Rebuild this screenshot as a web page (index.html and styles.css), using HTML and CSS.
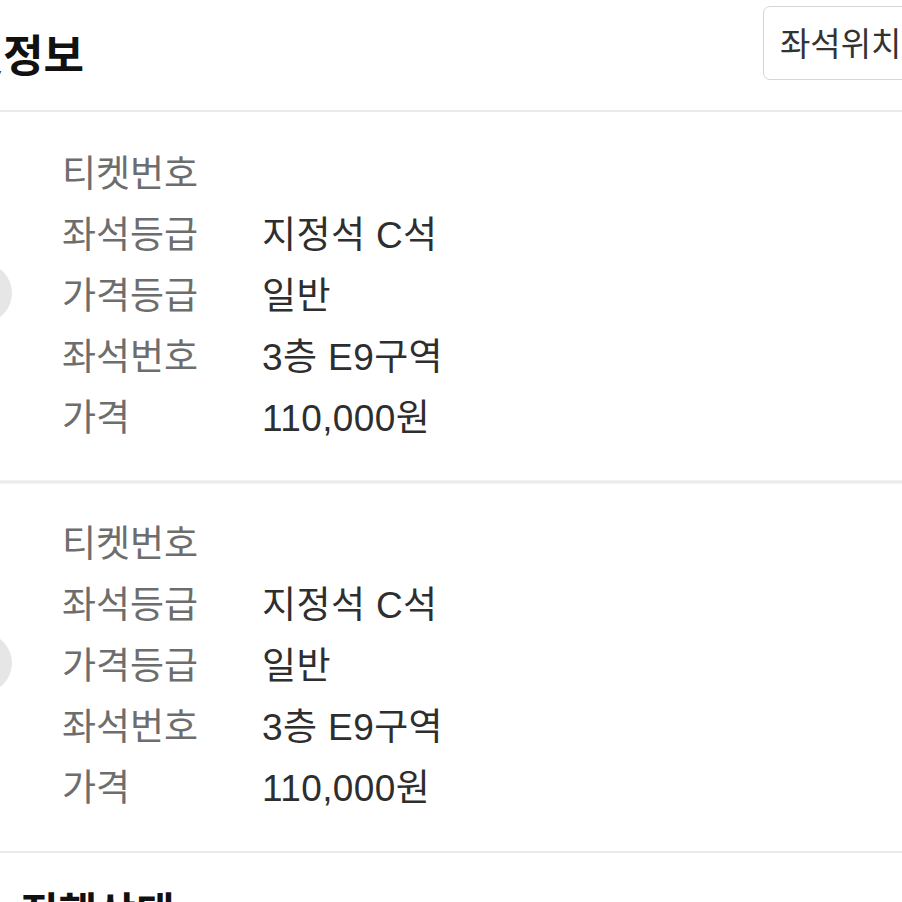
FILE: index.html
```html
<!DOCTYPE html>
<html lang="ko">
<head>
<meta charset="utf-8">
<link rel="stylesheet" href="styles.css">
</head>
<body>
<div class="page">
  <header class="head">
    <h1 class="title">티켓정보</h1>
    <button class="seat-btn">좌석위치 보기</button>
  </header>

  <section class="ticket">
    <div class="thumb"></div>
    <dl class="rows">
      <div class="row"><dt>티켓번호</dt><dd></dd></div>
      <div class="row"><dt>좌석등급</dt><dd>지정석 C석</dd></div>
      <div class="row"><dt>가격등급</dt><dd>일반</dd></div>
      <div class="row"><dt>좌석번호</dt><dd>3층 E9구역</dd></div>
      <div class="row"><dt>가격</dt><dd>110,000원</dd></div>
    </dl>
  </section>
  <div class="sep"></div>
  <section class="ticket second">
    <div class="thumb"></div>
    <dl class="rows">
      <div class="row"><dt>티켓번호</dt><dd></dd></div>
      <div class="row"><dt>좌석등급</dt><dd>지정석 C석</dd></div>
      <div class="row"><dt>가격등급</dt><dd>일반</dd></div>
      <div class="row"><dt>좌석번호</dt><dd>3층 E9구역</dd></div>
      <div class="row"><dt>가격</dt><dd>110,000원</dd></div>
    </dl>
  </section>
  <div class="line"></div>
  <h2 class="status">진행상태</h2>
</div>
</body>
</html>
```

FILE: styles.css
```css
html, body {
  margin: 0;
  padding: 0;
  background: #fff;
  overflow: hidden;
}
body {
  font-family: "Liberation Sans", "Noto Sans CJK KR", sans-serif;
  color: #222;
}
.page {
  margin-left: -84px;
  width: 1100px;
}
.head {
  display: grid;
  grid-template-columns: 847px 220px;
  align-items: start;
  height: 110px;
  border-bottom: 2px solid #ebebeb;
}
.title {
  margin: 0;
  padding: 25px 0 0 6px;
  font-family: "Noto Sans CJK KR", sans-serif;
  font-size: 44px;
  font-weight: 700;
  line-height: 56px;
  color: #111;
}
.seat-btn {
  margin-top: 6px;
  height: 74px;
  width: 220px;
  padding: 0 0 2px 16px;
  text-align: left;
  background: #fff;
  border: 1.5px solid #d6d6d6;
  border-radius: 7px;
  font-family: "Noto Sans CJK KR", sans-serif;
  font-size: 33px;
  color: #333;
  white-space: nowrap;
  overflow: hidden;
}
.ticket {
  display: flex;
  align-items: center;
  padding: 28px 0 35px 36px;
}
.ticket.second {
  padding: 26px 0 36px 36px;
}
.thumb {
  width: 60px;
  height: 60px;
  border-radius: 50%;
  background: #e6e6e6;
  flex: none;
}
.rows {
  margin: 0 0 0 50px;
}
.row {
  display: flex;
  height: 61px;
  align-items: center;
}
.row dt {
  width: 200px;
  font-size: 37px;
  color: #6d6d6d;
}
.row dd {
  margin: 0;
  font-size: 37px;
  letter-spacing: 0.4px;
  color: #2e2e2e;
}
.sep {
  height: 4px;
  background: linear-gradient(#f6f6f6, #e9e9e9 50%, #f7f7f7);
}
.line {
  height: 2px;
  background: #ebebeb;
}
.status {
  margin: 0;
  padding: 30px 0 0 104px;
  font-family: "Noto Sans CJK KR", sans-serif;
  font-size: 42px;
  font-weight: 700;
  line-height: 54px;
  color: #111;
}
```
